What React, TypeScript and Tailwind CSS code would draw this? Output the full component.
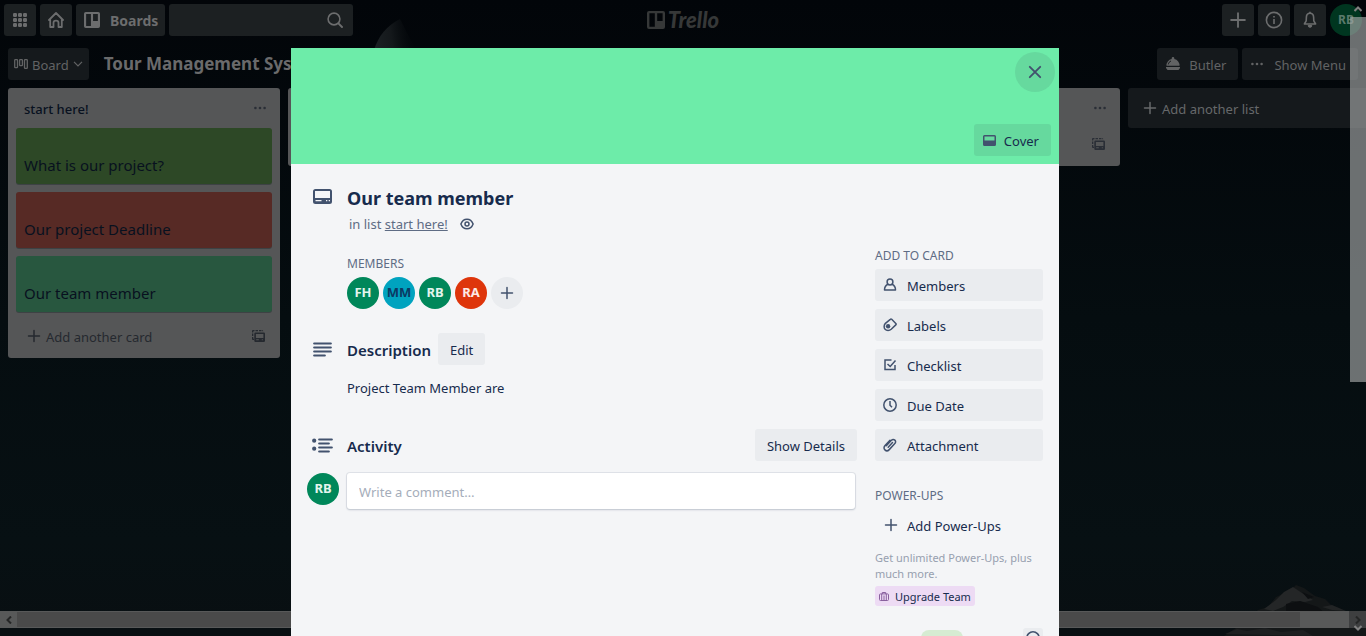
import React from 'react';

type IconProps = { className?: string };

const GridIcon = ({ className = '' }: IconProps) => (
  <svg viewBox="0 0 14 14" className={`size-3.5 ${className}`} fill="currentColor" aria-hidden="true">
    {[0, 5, 10].map((y) => [0, 5, 10].map((x) => <rect key={`${x}-${y}`} x={x} y={y} width="4" height="4" rx="1.2" />))}
  </svg>
);

const HomeIcon = () => (
  <svg viewBox="0 0 16 16" className="size-4" fill="none" stroke="currentColor" strokeWidth="1.8" strokeLinejoin="round" strokeLinecap="round" aria-hidden="true">
    <path d="M1 8 8 1l7 7M2.2 7.2V15h3.3v-4.2c0-3 5-3 5 0V15h3.3V7.2" />
  </svg>
);

const BoardsIcon = ({ className = 'size-4' }: IconProps) => (
  <svg viewBox="0 0 18 18" className={className} fill="currentColor" fillRule="evenodd" aria-hidden="true">
    <path d="M2 0h14a2 2 0 0 1 2 2v14a2 2 0 0 1-2 2H2a2 2 0 0 1-2-2V2a2 2 0 0 1 2-2Zm.4 2.2v13.6h5.4V2.2Zm7.8 0V10h5.4V2.2Z" />
  </svg>
);

const SearchIcon = () => (
  <svg viewBox="0 0 16 16" className="size-4 shrink-0" fill="none" stroke="currentColor" strokeWidth="1.6" strokeLinecap="round" aria-hidden="true">
    <circle cx="7" cy="7" r="5.9" />
    <path d="m11.4 11.4 3.6 3.6" strokeWidth="1.900" />
  </svg>
);

const PlusIcon = ({ className = 'size-4' }: IconProps) => (
  <svg viewBox="0 0 16 16" className={className} fill="none" stroke="currentColor" strokeWidth="1.5" strokeLinecap="round" aria-hidden="true">
    <path d="M8 2.500v11M2.500 8h11" />
  </svg>
);

const InfoIcon = () => (
  <svg viewBox="0 0 18 18" className="size-[18px]" fill="none" stroke="currentColor" strokeWidth="1.6" aria-hidden="true">
    <circle cx="9" cy="9" r="7.6" />
    <path d="M9 8v5M9 5v1.6" />
  </svg>
);

const BellIcon = () => (
  <svg viewBox="0 0 16 18" className="h-[18px] w-4" fill="none" stroke="currentColor" strokeWidth="1.6" strokeLinejoin="round" aria-hidden="true">
    <path d="M8 2.200c-2.300 0-3.500 1.600-3.600 3.800L4.200 9.800 2.400 13h11.200L11.800 9.800 11.600 6C11.500 3.800 10.300 2.200 8 2.200Z" />
    <path d="M8 .8v1.500" />
    <path d="M6.200 14.500h3.600a1.800 1.800 0 0 1-3.600 0Z" fill="currentColor" strokeWidth="1" />
  </svg>
);

const BoardViewIcon = () => (
  <svg viewBox="0 0 14 10" className="h-2.5 w-3.5" fill="none" stroke="currentColor" strokeWidth="1.3" aria-hidden="true">
    <rect x="0.700" y="0.700" width="2.800" height="8" rx="0.600" />
    <rect x="5.600" y="0.700" width="2.800" height="6" rx="0.600" />
    <rect x="10.500" y="0.700" width="2.800" height="8.600" rx="0.600" />
  </svg>
);

const ChevronIcon = () => (
  <svg viewBox="0 0 10 6" className="h-1.5 w-2.5" fill="none" stroke="currentColor" strokeWidth="1.2" aria-hidden="true">
    <path d="m1 .8 4 4 4-4" />
  </svg>
);

const ButlerIcon = () => (
  <svg viewBox="0 0 16 14" className="h-3.5 w-4" fill="currentColor" aria-hidden="true">
    <path d="M6.700 1.300a1.300 1.300 0 0 1 2.600 0v.8A6.300 6.300 0 0 1 14.500 8.800h-13A6.300 6.300 0 0 1 6.700 2.100ZM1 10h14v1L13.500 13H2.500L1 11Z" />
    <path d="M3.300 7.400c.3-1.700 1.200-2.800 2.700-3.400" stroke="#15191c" fill="none" />
  </svg>
);

const DotsIcon = () => (
  <svg viewBox="0 0 14 4" className="h-1 w-3.5" fill="currentColor" aria-hidden="true">
    <circle cx="2.400" cy="2" r="1.300" />
    <circle cx="7" cy="2" r="1.300" />
    <circle cx="11.600" cy="2" r="1.300" />
  </svg>
);

const TemplateIcon = () => (
  <svg viewBox="0 0 13 12" className="h-3 w-[13px]" fill="currentColor" fillRule="evenodd" aria-hidden="true">
    <path d="M0 1a1 1 0 0 1 1-1h1.500v1.300H1.300V2.500H0ZM3.500 0H6v1.300H3.500ZM7 0h2.500v1.300H7ZM10.200 0a1 1 0 0 1 1 1v.3h-1ZM0 3.500h1.300V6H0ZM0 7h1.300v1.700H2V10H1a1 1 0 0 1-1-1Z" />
    <path d="M3.500 2.500h8.300A1.200 1.200 0 0 1 13 3.700v7.100a1.200 1.200 0 0 1-1.200 1.200H3.500a1.200 1.200 0 0 1-1.200-1.200V3.700a1.200 1.200 0 0 1 1.200-1.200Zm.4 1.500v4h7.500V4Zm.3 5.300v1h2.600v-1Zm5.600 0v1h1v-1Z" />
  </svg>
);

const CardIcon = () => (
  <svg viewBox="0 0 19 15" className="h-[15px] w-[19px]" fill="currentColor" fillRule="evenodd" aria-hidden="true">
    <path d="M2.500 0h14A2.500 2.500 0 0 1 19 2.500v10a2.500 2.500 0 0 1-2.500 2.500h-14A2.500 2.500 0 0 1 0 12.500v-10A2.500 2.500 0 0 1 2.500 0ZM2 2v7h15V2ZM2.500 11v1.300h6V11ZM13 11v1.300h1.300V11Zm2.700 0v1.300H17V11Z" />
  </svg>
);

const EyeIcon = () => (
  <svg viewBox="0 0 14 12" className="h-3 w-3.5" fill="none" stroke="currentColor" strokeWidth="1.500" aria-hidden="true">
    <path d="M.9 6C3.300-.4 10.700-.4 13.100 6 10.700 12.400 3.300 12.400.9 6Z" />
    <circle cx="7" cy="6" r="2" />
  </svg>
);

const LinesIcon = () => (
  <svg viewBox="0 0 19 15" className="h-[15px] w-[19px]" fill="none" stroke="currentColor" strokeWidth="2.200" strokeLinecap="round" aria-hidden="true">
    <path d="M1.200 1.500h16.600M1.200 5.500h16.600M1.200 9.500h16.600M1.200 13.500h10.600" />
  </svg>
);

const ActivityIcon = () => (
  <svg viewBox="0 0 21 15" className="h-[15px] w-[21px]" fill="none" stroke="currentColor" strokeWidth="2.200" strokeLinecap="round" aria-hidden="true">
    <path d="M7.200 1.500h12.600M7.200 5.500h9.600M7.200 9.500h12.600M7.200 13.500h9.600" />
    <circle cx="2.200" cy="2.700" r="2.100" fill="currentColor" stroke="none" />
    <circle cx="2.200" cy="10.700" r="2.100" fill="currentColor" stroke="none" />
  </svg>
);

const CloseIcon = () => (
  <svg viewBox="0 0 14 14" className="size-3.5" fill="none" stroke="currentColor" strokeWidth="1.900" strokeLinecap="round" aria-hidden="true">
    <path d="m1.800 1.800 10.400 10.400M12.200 1.800 1.800 12.200" />
  </svg>
);

const CoverIcon = () => (
  <svg viewBox="0 0 13 11" className="h-[11px] w-[13px]" fill="currentColor" fillRule="evenodd" aria-hidden="true">
    <path d="M1.500 0h10A1.500 1.500 0 0 1 13 1.500v8a1.500 1.500 0 0 1-1.500 1.500h-10A1.500 1.500 0 0 1 0 9.500v-8A1.500 1.500 0 0 1 1.500 0Zm0 1.500V5.500h10V1.500Z" />
  </svg>
);

const MemberIcon = () => (
  <svg viewBox="0 0 14 14" className="size-3.5" fill="none" stroke="currentColor" strokeWidth="1.500" strokeLinejoin="round" aria-hidden="true">
    <circle cx="7" cy="4" r="2.900" />
    <path d="M5 6.300C2.700 7.300 1.500 9.500 1.500 12h11c0-2.500-1.200-4.700-3.500-5.700" />
  </svg>
);

const LabelIcon = () => (
  <svg viewBox="0 0 14 14" className="size-3.5" fill="none" stroke="currentColor" strokeWidth="1.500" strokeLinejoin="round" aria-hidden="true">
    <path d="M7.300 1.300a1 1 0 0 1 1.400 0l4.100 4.200a1 1 0 0 1 0 1.400L8.200 11.300c-1.700 1.500-4.700 1.500-6.100 0-1.400-1.400-1.200-4.400.3-5.900Z" />
    <circle cx="5.100" cy="8.300" r="2.200" fill="currentColor" stroke="none" />
  </svg>
);

const ChecklistIcon = () => (
  <svg viewBox="0 0 14 14" className="size-3.5" fill="none" stroke="currentColor" strokeWidth="1.500" aria-hidden="true">
    <path d="M8.500 2H2v9.500h10V7" />
    <path d="m4.500 6 2.700 2.500L12.500 2.500" />
  </svg>
);

const ClockIcon = () => (
  <svg viewBox="0 0 14 14" className="size-3.5" fill="none" stroke="currentColor" strokeWidth="1.500" aria-hidden="true">
    <circle cx="7" cy="7" r="6.200" />
    <path d="M7 3v4.300l2 2" />
  </svg>
);

const HelpIcon = () => (
  <svg viewBox="0 0 14 14" className="size-3.5" fill="none" stroke="currentColor" strokeWidth="1.500" aria-hidden="true">
    <circle cx="7" cy="7" r="6.200" />
    <path d="M7 6v4.500" />
  </svg>
);

const ClipIcon = () => (
  <svg viewBox="0 0 24 24" className="size-3.5" fill="none" stroke="currentColor" strokeWidth="2.600" strokeLinecap="round" aria-hidden="true">
    <path d="m6 13 8-8.700c2-2 4.500-2.300 6.300-.7s1.700 4.200 0 6l-9.600 10.300c-2.200 2.300-5.300 2.500-7.400.5s-2-5 .2-7.300L12 4" />
    <path d="m16.300 7.700-7.400 8" />
  </svg>
);

const BriefcaseIcon = () => (
  <svg viewBox="0 0 10 9" className="h-[9px] w-2.5" fill="none" stroke="currentColor" aria-hidden="true">
    <rect x="0.500" y="1.900" width="9" height="6.600" rx="1" />
    <path d="M3.300 2V.5h3.400V2M2.700 2v6M5 3.500V8M7.300 2v6" />
  </svg>
);

const navButton = 'flex h-8 shrink-0 items-center justify-center rounded-[3px] bg-[#1c2022] text-[#6c6d6e]';

function Header() {
  return (
    <header className="flex h-10 items-center justify-between pl-1">
      <nav className="flex flex-1 items-center gap-1" aria-label="Main">
        <button className={`${navButton} w-8`} aria-label="Apps"><GridIcon /></button>
        <button className={`${navButton} w-8`} aria-label="Home"><HomeIcon /></button>
        <button className={`${navButton} gap-2.5 pl-2 pr-[7px] text-sm font-bold`}><BoardsIcon /><span className="pt-0.5">Boards</span></button>
        <label className={`${navButton} w-[184px] pr-2.5`}>
          <input className="h-full w-full min-w-0 bg-transparent px-2 text-sm outline-none" aria-label="Search" />
          <SearchIcon />
        </label>
      </nav>
      <a href="#" aria-label="Trello home" className="flex items-center gap-[3px] font-['Lato'] text-[22px] font-black italic leading-none text-[#363838]">
        <BoardsIcon className="size-[18px]" />
        Trello
      </a>
      <div className="flex flex-1 items-center justify-end gap-1 pr-1">
        <button className={`${navButton} w-8`} aria-label="Create"><PlusIcon className="size-5" /></button>
        <button className={`${navButton} w-8`} aria-label="Information"><InfoIcon /></button>
        <button className={`${navButton} w-8`} aria-label="Notifications"><BellIcon /></button>
        <button className="size-8 rounded-full bg-[#003620] text-xs font-bold text-[#5b7a6c]">RB</button>
      </div>
    </header>
  );
}

function BoardBar() {
  const button = 'flex h-8 items-center rounded-[3px] bg-[#15191c] text-[13px] text-[#626364]';
  return (
    <div className="flex items-center justify-between px-2 py-2">
      <div className="flex items-center gap-[15px]">
        <button className={`${button} gap-1 px-1.5`}><BoardViewIcon /><span className="pt-1">Board</span><ChevronIcon /></button>
        <h1 className="text-[17px] font-bold leading-7 text-[#6a6a6b]">Tour Management System</h1>
      </div>
      <div className="flex gap-1">
        <button className={`${button} gap-2 px-2`}><ButlerIcon /><span className="pr-1 pt-1">Butler</span></button>
        <button className={`${button} gap-2.5 pl-2 pr-3`}><DotsIcon /><span className="pt-1">Show Menu</span></button>
      </div>
    </div>
  );
}

const cards = [
  { title: 'What is our project?', color: 'bg-[#2d4826]' },
  { title: 'Our project Deadline', color: 'bg-[#572a25]' },
  { title: 'Our team member', color: 'bg-[#28573f]' },
];

function List({ title, items = [], children }: { title: string; items?: typeof cards; children?: React.ReactNode }) {
  return (
    <section className="w-[272px] shrink-0 rounded-[3px] bg-[#555657] text-[#08111f]">
      <div className="flex h-10 items-center justify-between pl-4 pr-[13px]">
        <h2 className="pt-1 text-[13px] font-medium">{title}</h2>
        <button className="text-[#2a2e36]" aria-label="List actions"><DotsIcon /></button>
      </div>
      <ul className="flex flex-col gap-2 px-2">
        {items.map((c) => (
          <li key={c.title} className={`flex h-14 items-end rounded-[3px] px-2 pb-[7px] text-[15px] leading-6 shadow-[0_1px_0_#3d4244] ${c.color}`}>{c.title}</li>
        ))}
      </ul>
      {children}
    </section>
  );
}

function AddCard() {
  return (
    <div className="flex items-center justify-between py-2 pl-4 pr-[15px] text-[#25292f]">
      <button className="flex h-7 items-center gap-1 pl-0.5 text-[13px]"><PlusIcon /><span className="pt-1">Add another card</span></button>
      <button aria-label="Create from template"><TemplateIcon /></button>
    </div>
  );
}

function Board() {
  return (
    <main className="flex items-start gap-2 pl-2">
      <List title="start here!" items={cards}><div className="pt-0.5"><AddCard /></div></List>
      <List title=""><div className="h-[38px]" /></List>
      <List title=""><div className="h-[38px]" /></List>
      <List title="">
        <div className="flex h-[38px] justify-end pr-[15px] pt-2.5 text-[#2a2e36]"><TemplateIcon /></div>
      </List>
      <button className="flex h-10 w-[272px] shrink-0 items-center gap-1 rounded-[3px] bg-[#15191c] pl-3.5 text-[13px] text-[#66686a]"><PlusIcon /><span className="pt-1">Add another list</span></button>
    </main>
  );
}

function Backdrop() {
  return (
    <svg className="absolute inset-0 h-full w-full" viewBox="0 0 1366 636" preserveAspectRatio="none" aria-hidden="true">
      <defs>
        <linearGradient id="sky" x1="0" y1="0" x2="0" y2="1">
          <stop offset="0" stopColor="#020509" />
          <stop offset="0.500" stopColor="#050d10" />
          <stop offset="0.850" stopColor="#071013" />
          <stop offset="1" stopColor="#090f12" />
        </linearGradient>
        <linearGradient id="moon" x1="0" y1="0.500" x2="1" y2="0.400">
          <stop offset="0" stopColor="#1b2023" />
          <stop offset="0.400" stopColor="#14181b" />
          <stop offset="1" stopColor="#04080b" stopOpacity="0" />
        </linearGradient>
      </defs>
      <rect width="1366" height="636" fill="url(#sky)" />
      <path d="M374 50c4-13 12-24 26-31l16 31Z" fill="url(#moon)" />
      <path d="M1224 636l18-12 16-14 10-3 8-10 15-7 5-5 8 3 11 8 10 3 8 8 12 5 9 4 12 5v15Z" fill="#141718" />
      <path d="M1264 609l12-9 8-8 9-5 12 8 8 5-8 2-13-1-9 6-10 4Z" fill="#242627" />
      <path d="M1322 607l10-2 14 6-14-1Z" fill="#222425" />
      <path d="M1286 604l14-3 18 6 8 7-18 4-22-6ZM1302 592l12 5-6 2Z" fill="#0d0f11" />
      <path d="M1225 634l12-5 10 2 18-3 16 4 22-2 10 6Z" fill="#1d1f20" />
    </svg>
  );
}

function Avatar({ initials, className }: { initials: string; className: string }) {
  return <span className={`flex size-8 shrink-0 items-center justify-center rounded-full text-[13px] font-bold ${className}`}>{initials}</span>;
}

const members = [
  { initials: 'FH', color: 'bg-[#00875a] text-[#e3f5ee]' },
  { initials: 'MM', color: 'bg-[#00a3bf] text-[#0b3a63]' },
  { initials: 'RB', color: 'bg-[#00875a] text-[#e3f5ee]' },
  { initials: 'RA', color: 'bg-[#de350b] text-[#fdeae5]' },
];

const actions = [
  { label: 'Members', Icon: MemberIcon },
  { label: 'Labels', Icon: LabelIcon },
  { label: 'Checklist', Icon: ChecklistIcon },
  { label: 'Due Date', Icon: ClockIcon },
  { label: 'Attachment', Icon: ClipIcon },
];

const sideLabel = 'text-xs leading-4 text-[#5e6c84]';

function Sidebar() {
  return (
    <aside className="w-[168px] shrink-0">
      <h3 className={`${sideLabel} mb-[5px]`}>ADD TO CARD</h3>
      <div className="flex flex-col gap-2">
        {actions.map(({ label, Icon }) => (
          <button key={label} className="flex h-8 items-center gap-2.5 rounded-[3px] bg-[#eaecef] px-2 text-[13px] text-[#172b4d]">
            <span className="text-[#42526e]"><Icon /></span>
            <span className="pt-1">{label}</span>
          </button>
        ))}
      </div>
      <h3 className={`${sideLabel} mb-[5px] mt-[27px]`}>POWER-UPS</h3>
      <button className="flex h-8 items-center gap-2 px-2 text-[13px] text-[#172b4d]">
        <PlusIcon className="size-4 text-[#42526e]" />
        <span className="pt-1">Add Power-Ups</span>
      </button>
      <p className="mb-1 mt-[9px] text-[11px] leading-4 text-[#97a0af]">Get unlimited Power-Ups, plus much more.</p>
      <button className="flex h-5 items-center gap-1.5 rounded-[3px] bg-[#eddbf4] px-1 text-[11px] text-[#172b4d]">
        <span className="text-[#89609e]"><BriefcaseIcon /></span>
        <span className="pt-0.5">Upgrade Team</span>
      </button>
      <div className="mt-[22px] flex items-start justify-end gap-[60px]">
        <span className="mt-0.5 h-4 w-[42px] rounded-full bg-[#d6ecd2]" />
        <button className="flex size-5 items-center justify-center rounded-[3px] bg-[#eaecef] text-[#42526e]" aria-label="Help"><HelpIcon /></button>
      </div>
    </aside>
  );
}

function CardDetail() {
  const subtle = 'h-8 rounded-[3px] bg-[#eaecef] px-3 pt-1 text-[13px] text-[#172b4d]';
  return (
    <div role="dialog" aria-label="Our team member" className="w-[768px] shrink-0 bg-[#f4f5f7] text-[#172b4d]">
      <div className="flex h-[116px] flex-col items-end justify-between bg-[#6deca9] pb-2 pt-1">
        <button className="mr-1 flex size-10 items-center justify-center rounded-full bg-[#66d99e] text-[#42526e]" aria-label="Close"><CloseIcon /></button>
        <button className="mr-2 flex h-8 items-center gap-2 rounded-[3px] bg-[#66d99e] pl-[9px] pr-3 text-[13px]">
          <span className="text-[#42526e]"><CoverIcon /></span>
          <span className="pt-1">Cover</span>
        </button>
      </div>

      <div className="px-4 pt-5">
        <div className="flex gap-[15px] pl-1.5">
          <span className="mt-[5px] text-[#42526e]"><CardIcon /></span>
          <div>
            <h2 className="text-lg font-bold leading-7">Our team member</h2>
            <p className="mt-0.5 flex items-center pl-0.5 text-[13px] leading-5 text-[#5e6c84]">
              in list&nbsp;<a href="#" className="underline">start here!</a>
              <span className="ml-3 text-[#42526e]"><EyeIcon /></span>
            </p>
          </div>
        </div>

        <div className="mt-[14px] flex items-start gap-[18px]">
          <div className="min-w-0 flex-1 pt-2">
            <div className="pl-10">
              <h3 className="text-xs leading-4 text-[#5e6c84]">MEMBERS</h3>
              <div className="mt-[5px] flex gap-1">
                {members.map((m) => <Avatar key={m.initials} initials={m.initials} className={m.color} />)}
                <button className="flex size-8 items-center justify-center rounded-full bg-[#eaecef] text-[#42526e]" aria-label="Add member"><PlusIcon className="size-4" /></button>
              </div>
            </div>

            <div className="mt-6 flex items-center gap-[15px] pl-1.5">
              <span className="text-[#42526e]"><LinesIcon /></span>
              <h3 className="pt-0.5 text-[15px] font-semibold">Description</h3>
              <button className={`${subtle} -ml-2`}>Edit</button>
            </div>
            <p className="mt-[13px] pl-10 text-[13px] leading-5">Project Team Member are</p>

            <div className="mt-[31px] flex items-center pl-[5px]">
              <span className="mr-3.5 text-[#42526e]"><ActivityIcon /></span>
              <h3 className="pt-0.5 text-[15px] font-semibold">Activity</h3>
              <button className={`${subtle} ml-auto`}>Show Details</button>
            </div>
            <div className="mt-3 flex gap-2 pr-0.5">
              <Avatar initials="RB" className="bg-[#00875a] text-[#e3f5ee]" />
              <input
                aria-label="Write a comment"
                placeholder="Write a comment…"
                className="h-9 min-w-0 flex-1 rounded-[3px] bg-white px-3 pt-0.5 text-[13px] shadow-[0_1px_2px_#c1c7d0,0_0_0_1px_#e0e3e8] outline-none placeholder:text-[#a5adba]"
              />
            </div>
          </div>
          <Sidebar />
        </div>
      </div>
    </div>
  );
}

function Arrow({ className = '' }: IconProps) {
  return (
    <svg viewBox="0 0 8 8" className={`size-2 ${className}`} fill="none" stroke="currentColor" strokeWidth="2" aria-hidden="true">
      <path d="M6 .5 2.500 4 6 7.500" />
    </svg>
  );
}

export default function App() {
  return (
    <div className="relative h-screen w-full overflow-hidden bg-[#050c0f] font-['Noto_Sans',sans-serif]">
      <Backdrop />
      <div className="relative flex h-full flex-col overflow-hidden">
        <Header />
        <BoardBar />
        <Board />
        <div className="mb-2 mt-auto flex h-[17px] items-stretch bg-[#585959] text-[#252626]">
          <span className="flex w-[17px] items-center justify-center"><Arrow /></span>
          <span className="my-px w-full max-w-[1283px] bg-[#4a4a4a]" />
          <span className="flex-1" />
          <span className="flex w-[17px] shrink-0 items-center justify-center bg-[#3e3f40]"><Arrow className="rotate-180" /></span>
        </div>
      </div>

      <div className="absolute inset-0 flex">
        <div className="flex flex-1 items-start justify-center overflow-hidden pt-12"><CardDetail /></div>
        <div className="flex w-4 flex-col items-center text-[#808080]">
          <span className="flex h-[17px] items-center"><Arrow className="rotate-90" /></span>
          <span className="h-[365px] w-full bg-[#a5a8a8]/65" />
          <span className="mt-auto flex h-[17px] items-center"><Arrow className="-rotate-90" /></span>
        </div>
      </div>
    </div>
  );
}
